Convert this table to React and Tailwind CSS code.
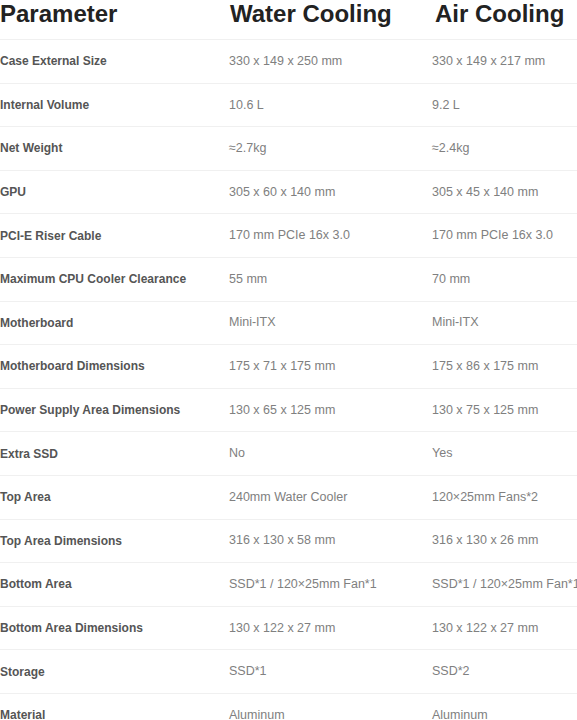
import React from 'react';

const rows = [
    ['Case External Size', '330 x 149 x 250 mm', '330 x 149 x 217 mm'],
    ['Internal Volume', '10.6 L', '9.2 L'],
    ['Net Weight', '≈2.7kg', '≈2.4kg'],
    ['GPU', '305 x 60 x 140 mm', '305 x 45 x 140 mm'],
    ['PCI-E Riser Cable', '170 mm PCIe 16x 3.0', '170 mm PCIe 16x 3.0'],
    ['Maximum CPU Cooler Clearance', '55 mm', '70 mm'],
    ['Motherboard', 'Mini-ITX', 'Mini-ITX'],
    ['Motherboard Dimensions', '175 x 71 x 175 mm', '175 x 86 x 175 mm'],
    ['Power Supply Area Dimensions', '130 x 65 x 125 mm', '130 x 75 x 125 mm'],
    ['Extra SSD', 'No', 'Yes'],
    ['Top Area', '240mm Water Cooler', '120×25mm Fans*2'],
    ['Top Area Dimensions', '316 x 130 x 58 mm', '316 x 130 x 26 mm'],
    ['Bottom Area', 'SSD*1 / 120×25mm Fan*1', 'SSD*1 / 120×25mm Fan*1'],
    ['Bottom Area Dimensions', '130 x 122 x 27 mm', '130 x 122 x 27 mm'],
    ['Storage', 'SSD*1', 'SSD*2'],
    ['Material', 'Aluminum', 'Aluminum'],
];

const App = () => {
    return (
        <div className="w-[577px] h-[720px] overflow-hidden bg-white font-['Liberation_Sans',Arial,sans-serif]">
            <div className="grid grid-cols-[229px_203px_1fr] h-[39px] items-start text-[24px] leading-[28px] font-bold text-[#222222] whitespace-nowrap">
                <div>Parameter</div>
                <div className="pl-[1px]">Water Cooling</div>
                <div className="pl-[3px]">Air Cooling</div>
            </div>
            {rows.map((r) => (
                <div
                    key={r[0]}
                    className="grid grid-cols-[229px_203px_1fr] h-[43.6px] items-center border-t border-[#f0f0f0] whitespace-nowrap"
                >
                    <div className="text-[12px] font-bold text-[#555555]">{r[0]}</div>
                    <div className="text-[12.5px] text-[#808080]">{r[1]}</div>
                    <div className="text-[12.5px] text-[#808080]">{r[2]}</div>
                </div>
            ))}
        </div>
    );
};

export default App;
